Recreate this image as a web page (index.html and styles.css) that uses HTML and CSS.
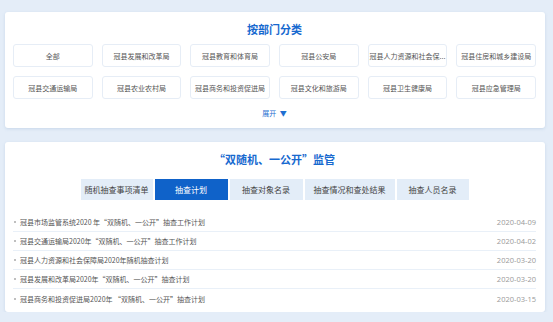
FILE: index.html
```html
<!DOCTYPE html>
<html lang="zh-CN">
<head>
  <meta charset="UTF-8" />
  <title>冠县 双随机一公开</title>
  <link rel="stylesheet" href="styles.css">
</head>
<body>
  <div class="page">

    <section class="card dept-card">
      <h2 class="card-title">按部门分类</h2>
      <div class="dept-grid">
        <a class="dept-btn">全部</a>
        <a class="dept-btn">冠县发展和改革局</a>
        <a class="dept-btn">冠县教育和体育局</a>
        <a class="dept-btn">冠县公安局</a>
        <a class="dept-btn" title="冠县人力资源和社会保障局">冠县人力资源和社会保...</a>
        <a class="dept-btn">冠县住房和城乡建设局</a>
        <a class="dept-btn">冠县交通运输局</a>
        <a class="dept-btn">冠县农业农村局</a>
        <a class="dept-btn">冠县商务和投资促进局</a>
        <a class="dept-btn">冠县文化和旅游局</a>
        <a class="dept-btn">冠县卫生健康局</a>
        <a class="dept-btn">冠县应急管理局</a>
      </div>
      <div class="expand">展开 <span class="caret">▼</span></div>
    </section>

    <section class="card supervise-card">
      <h2 class="card-title">“双随机、一公开”监管</h2>
      <div class="tabs">
        <span class="tab">随机抽查事项清单</span>
        <span class="tab active">抽查计划</span>
        <span class="tab">抽查对象名录</span>
        <span class="tab">抽查情况和查处结果</span>
        <span class="tab">抽查人员名录</span>
      </div>
      <ul class="news-list">
        <li><span class="news-title">冠县市场监管系统2020 年“双随机、一公开”抽查工作计划</span><span class="news-date">2020-04-09</span></li>
        <li><span class="news-title">冠县交通运输局2020年“双随机、一公开”抽查工作计划</span><span class="news-date">2020-04-02</span></li>
        <li><span class="news-title">冠县人力资源和社会保障局2020年随机抽查计划</span><span class="news-date">2020-03-20</span></li>
        <li><span class="news-title">冠县发展和改革局2020年“双随机、一公开”抽查计划</span><span class="news-date">2020-03-20</span></li>
        <li><span class="news-title">冠县商务和投资促进局2020年 “双随机、一公开”抽查计划</span><span class="news-date">2020-03-15</span></li>
      </ul>
    </section>

  </div>
</body>
</html>
```

FILE: styles.css
```css
/* --- BASE --- */
body {
  margin: 0;
  background-color: #e4edf8;
  font-family: "Noto Sans CJK SC", "Noto Sans", sans-serif;
  color: #444;
}
.page {
  padding: 12px 8px 0 5px;
  display: flex;
  flex-direction: column;
  gap: 14px;
}
.card {
  background-color: #ffffff;
  border-radius: 3px;
  box-shadow: 0 1px 3px rgba(120, 150, 190, 0.25);
}
.card-title {
  margin: 0;
  font-size: 11px;
  line-height: 14px;
  font-weight: 700;
  color: #1769cf;
  text-align: center;
}

/* --- DEPARTMENTS --- */
.dept-card { padding: 10px 9px 10px 8px; }
.dept-grid {
  margin-top: 8px;
  display: grid;
  grid-template-columns: repeat(6, 1fr);
  gap: 9px 9px;
}
.dept-btn {
  height: 23px;
  border: 1px solid #e6edf6;
  border-radius: 3px;
  box-sizing: border-box;
  display: flex;
  align-items: center;
  justify-content: center;
  padding: 0 1px;
  font-size: 7px;
  color: #555;
  white-space: nowrap;
}
.expand {
  margin-top: 9px;
  text-align: center;
  font-size: 7px;
  line-height: 10px;
  color: #1f6fd1;
}
.caret { font-size: 7px; margin-left: 2px; }

/* --- SUPERVISION --- */
.supervise-card { padding: 10px 9px 4px 8px; }
.tabs {
  margin-top: 13px;
  display: flex;
  justify-content: center;
  gap: 2px;
}
.tab {
  height: 21px;
  line-height: 21px;
  text-align: center;
  background-color: #e3edf8;
  font-size: 8px;
  color: #444;
  white-space: nowrap;
}
.tab:nth-child(1) { width: 72px; }
.tab:nth-child(2) { width: 73px; }
.tab:nth-child(3) { width: 73px; }
.tab:nth-child(4) { width: 90px; }
.tab:nth-child(5) { width: 72px; }
.tab.active { background-color: #0f62c9; color: #fff; }

.news-list {
  list-style: none;
  margin: 13px 0 0;
  padding: 0;
}
.news-list li {
  height: 19px;
  display: flex;
  align-items: center;
  justify-content: space-between;
  border-bottom: 1px solid #e9f0f8;
  box-sizing: border-box;
  font-size: 7px;
}
.news-list li:last-child { border-bottom: none; }
.news-title {
  position: relative;
  padding-left: 7px;
  color: #555;
}
.news-title:before {
  content: "";
  position: absolute;
  left: 1px;
  top: 50%;
  width: 2px;
  height: 2px;
  margin-top: -1px;
  border-radius: 50%;
  background-color: #aaa;
}
.news-date {
  font-family: "Open Sans", "Noto Sans", sans-serif;
  font-size: 7.5px;
  color: #999;
}
```
